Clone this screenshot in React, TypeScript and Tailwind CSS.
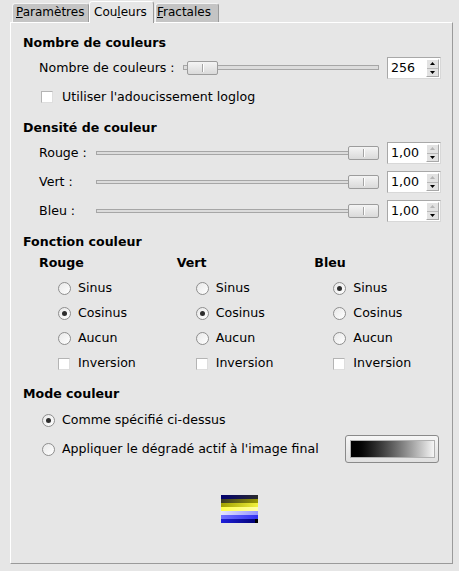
import React from "react";

function Tri({ dir, color }: { dir: "up" | "down"; color: string }) {
  return (
    <svg width="5" height="3" viewBox="0 0 5 3" className="block">
      {dir === "up" ? (
        <polygon points="2.5,0 5,3 0,3" fill={color} />
      ) : (
        <polygon points="0,0 5,0 2.5,3" fill={color} />
      )}
    </svg>
  );
}

function SpinBox({ value, upDisabled }: { value: string; upDisabled?: boolean }) {
  return (
    <div className="flex h-[22px] w-[54px] border border-t-[#a8a8a8] border-l-[#a8a8a8] border-r-[#d8d8d8] border-b-[#d8d8d8] bg-white">
      <div className="flex-1 pl-[3px] leading-[20px]">{value}</div>
      <div className="my-[1px] mr-[1px] flex w-[13px] flex-col border border-t-white border-l-white border-r-[#a8a8a8] border-b-[#a8a8a8] bg-[#e2e2e2]">
        <div className="flex flex-1 items-center justify-center border-b border-[#b8b8b8]">
          <Tri dir="up" color={upDisabled ? "#b4b4b4" : "#000"} />
        </div>
        <div className="flex flex-1 items-center justify-center">
          <Tri dir="down" color="#000" />
        </div>
      </div>
    </div>
  );
}

function Handle({ className }: { className: string }) {
  return (
    <div
      className={
        "absolute top-1/2 flex h-[14px] w-[31px] -translate-y-1/2 items-stretch justify-center rounded-[2px] border border-[#9c9c9c] bg-gradient-to-b from-[#f4f4f4] to-[#dadada] " +
        className
      }
    >
      <div className="my-[2px] w-[1px] bg-[#a4a4a4]" />
      <div className="my-[2px] w-[1px] bg-white" />
    </div>
  );
}

function Radio({ checked }: { checked?: boolean }) {
  return (
    <div className="flex h-[13px] w-[13px] shrink-0 items-center justify-center rounded-full border border-[#8e8e8e] bg-gradient-to-br from-[#e8e8e8] to-white">
      {checked && <div className="h-[5px] w-[5px] rounded-full bg-[#2e2e2e]" />}
    </div>
  );
}

function Check() {
  return (
    <div className="h-[12px] w-[12px] shrink-0 border border-t-[#b4b4b4] border-l-[#b4b4b4] border-r-[#dedede] border-b-[#dedede] bg-white" />
  );
}

function DensityRow({ label, mt }: { label: string; mt: string }) {
  return (
    <div className={"flex h-[22px] items-center pl-[16px] " + mt}>
      <div className="w-[57px]">{label}</div>
      <div className="relative h-[16px] w-[283px]">
        <div className="absolute left-0 right-0 top-[6px] h-[4px] border border-[#a6a6a6] bg-[#dcdcdc]" />
        <Handle className="left-[252px]" />
      </div>
      <div className="ml-[8px]">
        <SpinBox value="1,00" upDisabled />
      </div>
    </div>
  );
}

function FuncColumn({ title, checked }: { title: string; checked: number }) {
  const opts = ["Sinus", "Cosinus", "Aucun"];
  return (
    <div className="w-[138px]">
      <div className="h-[16px] font-bold leading-[16px]">{title}</div>
      <div className="mt-[5px] pl-[19px]">
        {opts.map((o, i) => (
          <div key={o} className="flex h-[25px] items-center">
            <Radio checked={checked === i} />
            <span className="ml-[7px]">{o}</span>
          </div>
        ))}
        <div className="flex h-[25px] items-center">
          <Check />
          <span className="ml-[8px]">Inversion</span>
        </div>
      </div>
    </div>
  );
}

function Preview() {
  const rows = [
    ["#000070", "#2a2a2a"],
    ["#383828", "#9a9a00"],
    ["#a0a000", "#f2f23c"],
    ["#ffff48", "#ffffa8"],
    ["#e4e4ff", "#9494ff"],
    ["#7070ff", "#3030ee"],
    ["#2020dc", "#000070"],
  ];
  return (
    <svg width="37" height="28" viewBox="0 0 37 28" className="block">
      <defs>
        {rows.map((r, i) => (
          <linearGradient key={i} id={"g" + i} x1="0" x2="1" y1="0" y2="0">
            <stop offset="0" stopColor={r[0]} />
            <stop offset="1" stopColor={r[1]} />
          </linearGradient>
        ))}
      </defs>
      {rows.map((_, i) => (
        <rect key={i} x="0" y={i * 4} width="37" height="4" fill={`url(#g${i})`} />
      ))}
      <rect x="34" y="24" width="3" height="4" fill="#000" />
    </svg>
  );
}

export default function App() {
  return (
    <div className="h-[571px] w-[459px] overflow-hidden bg-[#e6e6e6] font-['DejaVu_Sans',sans-serif] text-[12px] text-black">
      {/* Tabs */}
      <div className="flex h-[22px] items-end pl-[12px]">
        <div className="h-[19px] w-[77px] rounded-t-[3px] border border-b-0 border-t-[#f4f4f4] border-l-[#f4f4f4] border-r-[#9a9a9a] bg-[#c4c4c4] pl-[3px] leading-[17px]">
          <span className="underline">P</span>aramètres
        </div>
        <div className="relative z-10 -mb-[1px] h-[22px] w-[65px] rounded-t-[3px] border border-b-0 border-t-white border-l-white border-r-[#9a9a9a] bg-[#e6e6e6] pl-[4px] pt-[2px] leading-[17px]">
          Cou<span className="underline">l</span>eurs
        </div>
        <div className="ml-[1px] h-[19px] w-[64px] rounded-t-[3px] border border-b-0 border-t-[#f4f4f4] border-l-[#f4f4f4] border-r-[#9a9a9a] bg-[#c4c4c4] pl-[1px] leading-[17px]">
          <span className="underline">F</span>ractales
        </div>
      </div>

      {/* Panel */}
      <div className="ml-[10px] h-[542px] w-[443px] border border-t-white border-l-white border-r-[#9a9a9a] border-b-[#9a9a9a] pl-[12px] text-[12.6px]">
        <div className="mt-[12px] h-[16px] font-bold leading-[16px]">Nombre de couleurs</div>
        <div className="mt-[6px] flex h-[22px] items-center pl-[16px]">
          <div className="w-[144px]">Nombre de couleurs :</div>
          <div className="relative h-[16px] w-[196px]">
            <div className="absolute left-0 right-0 top-[5px] h-[5px] border border-[#a6a6a6] bg-[#dcdcdc]" />
            <Handle className="left-[4px]" />
          </div>
          <div className="ml-[8px]">
            <SpinBox value="256" />
          </div>
        </div>
        <div className="mt-[10px] flex h-[16px] items-center pl-[18px]">
          <Check />
          <span className="ml-[9px]">Utiliser l'adoucissement loglog</span>
        </div>

        <div className="mt-[15px] h-[16px] font-bold leading-[16px]">Densité de couleur</div>
        <DensityRow label="Rouge :" mt="mt-[6px]" />
        <DensityRow label="Vert :" mt="mt-[7px]" />
        <DensityRow label="Bleu :" mt="mt-[7px]" />

        <div className="mt-[12px] h-[16px] font-bold leading-[16px]">Fonction couleur</div>
        <div className="mt-[5px] flex pl-[16px]">
          <FuncColumn title="Rouge" checked={1} />
          <FuncColumn title="Vert" checked={1} />
          <FuncColumn title="Bleu" checked={0} />
        </div>

        <div className="mt-[10px] h-[16px] font-bold leading-[16px]">Mode couleur</div>
        <div className="mt-[10px] flex h-[16px] items-center pl-[19px]">
          <Radio checked />
          <span className="ml-[7px]">Comme spécifié ci-dessus</span>
        </div>
        <div className="mt-[7px] flex h-[28px] items-center pl-[19px]">
          <Radio />
          <span className="ml-[7px]">Appliquer le dégradé actif à l'image final</span>
          <div className="ml-auto mr-[13px] flex h-[28px] w-[94px] items-center justify-center rounded-[3px] border border-[#8a8a8a] bg-gradient-to-b from-[#f6f6f6] to-[#e0e0e0]">
            <div className="h-[18px] w-[85px] border border-[#b0b0b0] bg-gradient-to-r from-black to-[#f6f6f6]" />
          </div>
        </div>

        <div className="ml-[198px] mt-[32px]">
          <Preview />
        </div>
      </div>
    </div>
  );
}
